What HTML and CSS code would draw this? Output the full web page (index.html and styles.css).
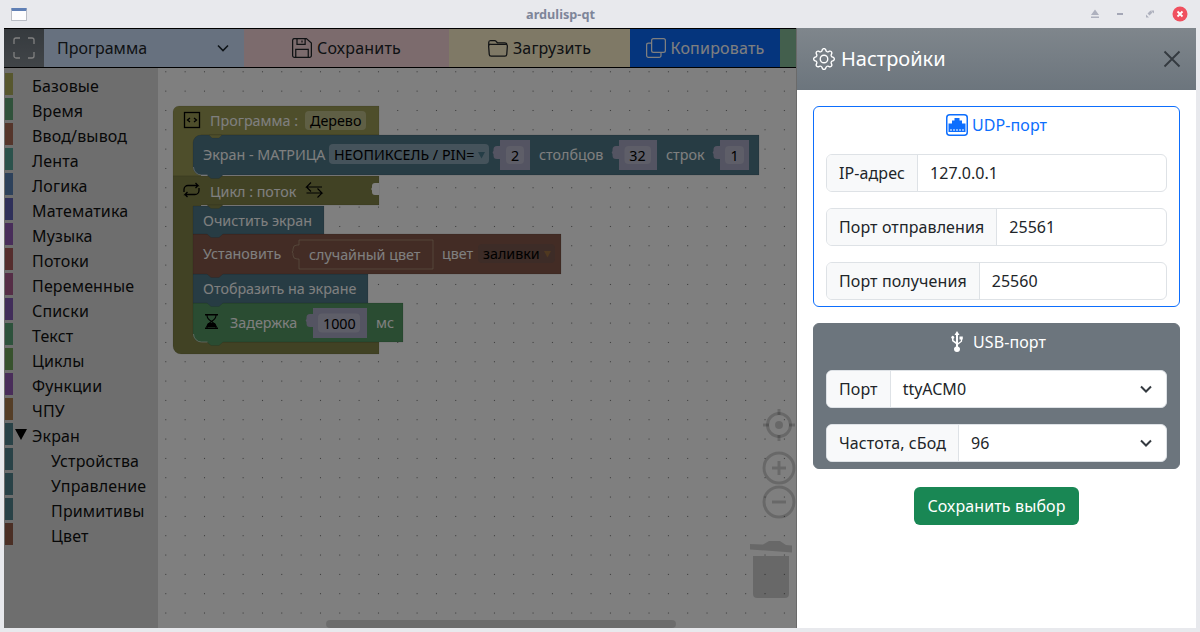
FILE: index.html
```html
<!DOCTYPE html>
<html lang="ru">
<head>
<meta charset="utf-8">
<title>ardulisp-qt</title>
<link rel="stylesheet" href="styles.css">
</head>
<body>
<div class="window">
  <header class="titlebar">
    <div class="win-icon"></div>
    <div class="win-title">ardulisp-qt</div>
    <div class="win-controls">
      <svg class="ctl ctl-a" width="24" height="14" viewBox="0 0 24 14"><path d="M12 2.500L16 8H8Z M8 9.500H16V11H8Z" fill="#aeb1be"/></svg>
      <svg class="ctl ctl-b" width="24" height="14" viewBox="0 0 24 14"><rect x="9" y="6" width="6" height="2" fill="#a4a7b6"/></svg>
      <svg class="ctl ctl-c" width="24" height="14" viewBox="0 0 24 14"><path d="M13 3.500h3v3zM8 7.500l3 3H8z M9.500 6.500l3-3 2 2-3 3z" fill="#aeb1be"/></svg>
      <svg class="ctl-close" width="16" height="16" viewBox="0 0 16 16"><circle cx="8" cy="8" r="7.500" fill="#f0505f"/><path d="M5.500 5.500l5 5M10.500 5.500l-5 5" stroke="#fff" stroke-width="1.800"/></svg>
    </div>
  </header>

  <div class="app">
    <nav class="toolbar">
      <button class="tb-expand">
        <svg width="22" height="22" viewBox="0 0 22 22" fill="none" stroke="#fff" stroke-width="1.300"><path d="M1 7V3a2 2 0 0 1 2-2h4M15 1h4a2 2 0 0 1 2 2v4M21 15v4a2 2 0 0 1-2 2h-4M7 21H3a2 2 0 0 1-2-2v-4"/></svg>
      </button>
      <div class="tb-select"><span>Программа</span>
        <svg width="12" height="8" viewBox="0 0 12 8" fill="none" stroke="#1c2730" stroke-width="1.600"><path d="M1 1.500l5 5 5-5"/></svg>
      </div>
      <button class="tb-btn tb-save">
        <svg width="20" height="20" viewBox="0 0 16 16" fill="none" stroke="#212529" stroke-width="1"><path d="M1.500.500h10l4 3.500v10a1.500 1.500 0 0 1-1.500 1.500H2A1.500 1.500 0 0 1 .500 14V2a1.500 1.500 0 0 1 1-1.500z"/><path d="M4 .500v4.500h6.500V.500M8 2v1.500M3 15.500V9h10v6.500"/></svg>
        Сохранить</button>
      <button class="tb-btn tb-load">
        <svg width="20" height="20" viewBox="0 0 16 16" fill="none" stroke="#212529" stroke-width="1"><path d="M.600 6V3.500A1.500 1.500 0 0 1 2 2h3.300c.8 0 1 .4 1.500 1l.7.800h6a1.500 1.500 0 0 1 1.500 1.500"/><path d="M1.900 5h12.200a1.400 1.400 0 0 1 1.400 1.500l-.5 6.600a1.500 1.500 0 0 1-1.500 1.400H2.500A1.500 1.500 0 0 1 1 13.100L.5 6.500A1.400 1.400 0 0 1 1.900 5z"/></svg>
        Загрузить</button>
      <button class="tb-btn tb-copy">
        <svg width="20" height="20" viewBox="0 0 16 16" fill="none" stroke="#fff" stroke-width="1"><rect x="4.500" y=".500" width="11" height="11" rx="1.500"/><path d="M4.500 4H2A1.500 1.500 0 0 0 .500 5.500V14A1.500 1.500 0 0 0 2 15.500h8.500a1.500 1.500 0 0 0 1.500-1.500v-2.500"/></svg>
        Копировать</button>
      <div class="tb-rest"></div>
    </nav>

    <div class="main">
      <aside class="toolbox">
        <div class="cat"><i class="tag c1"></i><span>Базовые</span></div>
        <div class="cat"><i class="tag c2"></i><span>Время</span></div>
        <div class="cat"><i class="tag c3"></i><span>Ввод/вывод</span></div>
        <div class="cat"><i class="tag c4"></i><span>Лента</span></div>
        <div class="cat"><i class="tag c5"></i><span>Логика</span></div>
        <div class="cat"><i class="tag c6"></i><span>Математика</span></div>
        <div class="cat"><i class="tag c7"></i><span>Музыка</span></div>
        <div class="cat"><i class="tag c8"></i><span>Потоки</span></div>
        <div class="cat"><i class="tag c9"></i><span>Переменные</span></div>
        <div class="cat"><i class="tag c10"></i><span>Списки</span></div>
        <div class="cat"><i class="tag c11"></i><span>Текст</span></div>
        <div class="cat"><i class="tag c12"></i><span>Циклы</span></div>
        <div class="cat"><i class="tag c13"></i><span>Функции</span></div>
        <div class="cat"><i class="tag c14"></i><span>ЧПУ</span></div>
        <div class="cat cat-open"><i class="tag c15"></i><b class="arrow"></b><span>Экран</span></div>
        <div class="cat cat-sub"><i class="tag c15"></i><span>Устройства</span></div>
        <div class="cat cat-sub"><i class="tag c15"></i><span>Управление</span></div>
        <div class="cat cat-sub"><i class="tag c15"></i><span>Примитивы</span></div>
        <div class="cat cat-sub"><i class="tag c16"></i><span>Цвет</span></div>
      </aside>

      <svg class="workspace" viewBox="158 68 1038 560" width="1038" height="560">
        <defs>
          <pattern id="grid" x="165.300" y="71.300" width="19.330" height="19.330" patternUnits="userSpaceOnUse">
            <rect width="1" height="1" fill="#666"/>
          </pattern>
        </defs>
        <rect x="158" y="68" width="1038" height="560" fill="#fff"/>
        <rect x="158" y="68" width="1038" height="560" fill="url(#grid)"/>

        <!-- program block -->
        <path class="b-olive" d="M179 106H379V135H201V176H173V112a6 6 0 0 1 6-6z"/>
        <!-- loop block -->
        <path class="b-olive2" d="M173 176H379V205H201V342H379V354H181a8 8 0 0 1-8-8z"/>
        <path class="b-notch" d="M379 183h-4a3 3 0 0 0-3 3v1.500a2 2 0 0 0 0 3V192a3 3 0 0 0 3 3h4z"/>

        <!-- delay -->
        <path class="b-green" d="M193 303H403V342H223l-4 3.500h-8l-4-3.500H201a8 8 0 0 1-8-8z"/>
        <path class="b-edge" d="M193.500 334a8 8 0 0 0 8 8h6"/>
        <!-- display -->
        <path class="b-teal" d="M193 274H368V303H223l-4 3.500h-8l-4-3.500H193z"/>
        <!-- set colour -->
        <path class="b-brown" d="M193 234H561V274H223l-4 3.500h-8l-4-3.500H193z"/>
        <!-- clear -->
        <path class="b-teal" d="M193 206H324V234H223l-4 3.500h-8l-4-3.500H193z"/>
        <path class="b-olive2" d="M207 205h16l-4 3.500h-8z"/>
        <!-- matrix -->
        <path class="b-teal" d="M201 135H759V175H223l-4 3.500h-8l-4-3.500H201a8 8 0 0 1-8-8V143a8 8 0 0 1 8-8z"/>
        <path class="b-edge" d="M193.500 167a8 8 0 0 0 8 8h6"/>
        <path class="b-olive" d="M209 135h13l-3 3h-7z"/>

        <!-- program row -->
        <rect class="ico-line" x="184.500" y="112.500" width="15" height="15"/>
        <path class="ico-line" d="M190 118l-2.500 2 2.500 2M194 118l2.500 2-2.500 2"/>
        <text class="bt" x="210" y="126">Программа :</text>
        <rect class="f-olive" x="305" y="111" width="61" height="19" rx="4"/>
        <text class="fv" x="310" y="126">Дерево</text>

        <!-- matrix row -->
        <text class="bt" x="203" y="160">Экран - МАТРИЦА</text>
        <rect class="f-teal" x="329" y="144" width="160" height="20" rx="4"/>
        <text class="fv" x="334" y="160">НЕОПИКСЕЛЬ / PIN=</text>
        <path class="arr-teal" d="M478 152h7l-3.500 6.500z"/>
        <path class="shadow" d="M500 140h30v30h-30v-11h-3a3.500 3.500 0 0 1-3.500-3.500v-1.500a2 2 0 0 1 0-3v-1.500a3.500 3.500 0 0 1 3.500-3.500h3z"/>
        <rect class="field" x="506" y="146" width="18" height="18" rx="4"/>
        <text class="fv" x="515" y="161" text-anchor="middle">2</text>
        <text class="bt" x="539" y="160">столбцов</text>
        <path class="shadow" d="M619 140h38v30h-38v-11h-3a3.500 3.500 0 0 1-3.500-3.500v-1.500a2 2 0 0 1 0-3v-1.500a3.500 3.500 0 0 1 3.500-3.500h3z"/>
        <rect class="field" x="624.500" y="146" width="26.500" height="18" rx="4"/>
        <text class="fv" x="637.500" y="161" text-anchor="middle">32</text>
        <text class="bt" x="666" y="160">строк</text>
        <path class="shadow" d="M720 140h29v30h-29v-11h-3a3.500 3.500 0 0 1-3.500-3.500v-1.500a2 2 0 0 1 0-3v-1.500a3.500 3.500 0 0 1 3.500-3.500h3z"/>
        <rect class="field" x="725" y="146" width="19" height="18" rx="4"/>
        <text class="fv" x="734.500" y="161" text-anchor="middle">1</text>

        <!-- loop row -->
        <path class="ico-line" d="M184 192v-2.500a4 4 0 0 1 4-4h10l-2.500-2.500M198 185.500l-2.500 2.500M199 188v2.500a4 4 0 0 1-4 4h-10l2.500-2.500M185 194.500l2.500 2.500"/>
        <text class="bt" x="210" y="197">Цикл : поток</text>
        <path class="ico-thin" d="M322 187h-15.500l4.500-4.500M306.500 187l4.500 4.500M306.500 193h15.500l-4.500-4.500M322 193l-4.500 4.500"/>

        <text class="bt" x="203" y="226">Очистить экран</text>

        <!-- set colour row -->
        <text class="bt" x="203" y="259">Установить</text>
        <path class="tab-brown" d="M299 240h134v29h-134v-10h-2a4 4 0 0 1-4-4v-1.500a2 2 0 0 1 0-3v-1.500a4 4 0 0 1 4-4h2z"/>
        <text class="bt" x="309" y="260">случайный цвет</text>
        <text class="bt" x="442" y="259">цвет</text>
        <rect class="f-brown" x="478" y="244" width="77" height="19" rx="4"/>
        <text class="fv" x="483" y="259">заливки</text>
        <path class="arr-brown" d="M544 251h7l-3.500 6.500z"/>

        <text class="bt" x="203" y="294">Отобразить на экране</text>

        <!-- delay row -->
        <path class="ico-fill" d="M205 314h13v1.500h-13zM205 327.500h13v1.500h-13zM208 323h7l2 4h-11z"/>
        <path class="ico-thin" d="M207 315c0 4 2 5 4.500 6.500 2.500-1.500 4.500-2.500 4.500-6.500M207 328c0-4 2-5 4.500-6.500 2.500 1.500 4.500 2.500 4.500 6.500"/>
        <text class="bt" x="230" y="328">Задержка</text>
        <path class="shadow" d="M313 308h54v30h-54v-11h-3a3.500 3.500 0 0 1-3.500-3.500v-1.500a2 2 0 0 1 0-3v-1.500a3.500 3.500 0 0 1 3.500-3.500h3z"/>
        <rect class="field" x="318" y="313.500" width="42" height="19" rx="4"/>
        <text class="fv" x="323" y="329">1000</text>
        <text class="bt" x="376" y="328">мс</text>

        <!-- workspace controls -->
        <g class="ctrl">
          <circle cx="779" cy="425" r="11.500"/>
          <path d="M779 409v6M779 435v6M763 425h6M789 425h6"/>
          <circle class="ctrl-dot" cx="779" cy="425" r="4"/>
          <circle cx="779" cy="468" r="15"/>
          <path d="M772 468h14M779 461v14"/>
          <circle cx="779" cy="502" r="15"/>
          <path d="M772 502h14"/>
        </g>
        <path class="trash" d="M750 544l13 .5 6-3.500h11l6 4 6 .5v7l-42-3z"/>
        <path class="trash" d="M753 556h36v38a4 4 0 0 1-4 4h-28a4 4 0 0 1-4-4z"/>
        <rect class="hscroll" x="326" y="620" width="350" height="8" rx="4"/>
      </svg>
    </div>

    <div class="backdrop"></div>

    <section class="offcanvas">
      <div class="oc-head">
        <h5 class="oc-title">
          <svg width="22" height="22" viewBox="0 0 16 16" fill="#fff"><path d="M8 4.754a3.246 3.246 0 1 0 0 6.492 3.246 3.246 0 0 0 0-6.492M5.754 8a2.246 2.246 0 1 1 4.492 0 2.246 2.246 0 0 1-4.492 0"/><path d="M9.796 1.343c-.527-1.790-3.065-1.790-3.592 0l-.094.319a.873.873 0 0 1-1.255.520l-.292-.160c-1.640-.892-3.433.902-2.540 2.541l.159.292a.873.873 0 0 1-.520 1.255l-.319.094c-1.790.527-1.790 3.065 0 3.592l.319.094a.873.873 0 0 1 .520 1.255l-.160.292c-.892 1.640.901 3.434 2.541 2.540l.292-.159a.873.873 0 0 1 1.255.520l.094.319c.527 1.790 3.065 1.790 3.592 0l.094-.319a.873.873 0 0 1 1.255-.520l.292.160c1.640.893 3.434-.902 2.540-2.541l-.159-.292a.873.873 0 0 1 .520-1.255l.319-.094c1.790-.527 1.790-3.065 0-3.592l-.319-.094a.873.873 0 0 1-.520-1.255l.160-.292c.893-1.640-.902-3.433-2.541-2.540l-.292.159a.873.873 0 0 1-1.255-.520zm-2.633.283c.246-.835 1.428-.835 1.674 0l.094.319a1.873 1.873 0 0 0 2.693 1.115l.291-.160c.764-.415 1.600.420 1.184 1.185l-.159.292a1.873 1.873 0 0 0 1.116 2.692l.318.094c.835.246.835 1.428 0 1.674l-.319.094a1.873 1.873 0 0 0-1.115 2.693l.160.291c.415.764-.420 1.600-1.185 1.184l-.291-.159a1.873 1.873 0 0 0-2.693 1.116l-.094.318c-.246.835-1.428.835-1.674 0l-.094-.319a1.873 1.873 0 0 0-2.692-1.115l-.292.160c-.764.415-1.600-.420-1.184-1.185l.159-.291A1.873 1.873 0 0 0 1.945 8.930l-.319-.094c-.835-.246-.835-1.428 0-1.674l.319-.094A1.873 1.873 0 0 0 3.060 4.377l-.160-.292c-.415-.764.420-1.600 1.185-1.184l.292.159a1.873 1.873 0 0 0 2.692-1.115z"/></svg>
          Настройки
        </h5>
        <svg class="oc-close" width="18" height="18" viewBox="0 0 18 18" stroke="#343a40" stroke-width="1.900" fill="none"><path d="M1.500 1.500l15 15M16.500 1.500l-15 15"/></svg>
      </div>
      <div class="oc-body">
        <div class="card card-udp">
          <div class="card-title">
            <svg width="22" height="22" viewBox="0 0 22 22"><rect x=".75" y=".75" width="20.500" height="20.500" rx="3" fill="#fff" stroke="#0d6efd" stroke-width="1.500"/><path d="M2.500 18V9.500H6V6.500H8.500V4H13.500V6.500H16V9.500H19.500V18Z" fill="#0d6efd"/><path d="M5 15v2M8 15v2M11 15v2M14 15v2M17 15v2" stroke="#fff"/></svg>
            <span>UDP-порт</span>
          </div>
          <div class="group"><div class="g-label">IP-адрес</div><div class="g-value">127.0.0.1</div></div>
          <div class="group"><div class="g-label">Порт отправления</div><div class="g-value">25561</div></div>
          <div class="group"><div class="g-label">Порт получения</div><div class="g-value">25560</div></div>
        </div>
        <div class="card card-usb">
          <div class="card-title">
            <svg width="16" height="22" viewBox="0 0 16 22" fill="#fff"><path d="M8 0l2.500 4H9v11.500c1.300.4 2 1.400 2 2.500a3 3 0 0 1-6 0c0-1.100.7-2.100 2-2.500V13L3.500 10.500A2 2 0 0 1 3 9.300V7.800a1.500 1.500 0 1 1 1.500 0v1.400L7 11V4H5.500z"/><path d="M9 12l2.800-2V8.500H10.500V5.500h3.300v3h-.7V10.500L9 13.800z"/></svg>
            <span>USB-порт</span>
          </div>
          <div class="group"><div class="g-label">Порт</div><div class="g-value g-select">ttyACM0<svg width="12" height="8" viewBox="0 0 12 8" fill="none" stroke="#343a40" stroke-width="2"><path d="M1 1.500l5 5 5-5"/></svg></div></div>
          <div class="group"><div class="g-label">Частота, сБод</div><div class="g-value g-select">96<svg width="12" height="8" viewBox="0 0 12 8" fill="none" stroke="#343a40" stroke-width="2"><path d="M1 1.500l5 5 5-5"/></svg></div></div>
        </div>
        <button class="btn-save">Сохранить выбор</button>
      </div>
    </section>
  </div>
</div>
</body>
</html>
```

FILE: styles.css
```css
* { box-sizing: border-box; }
html, body { margin: 0; height: 100%; }
body {
  font-family: "Noto Sans", sans-serif;
  font-size: 16px;
  color: #212529;
  background: #e8e9ed;
  overflow: hidden;
}
.window { width: 1200px; height: 632px; display: flex; flex-direction: column; padding: 0 4px 4px; }

.titlebar { height: 28px; flex: none; display: flex; align-items: center; position: relative; }
.win-icon {
  width: 16px; height: 13px; margin-left: 7px;
  border: 1px solid #b9bcc4; border-top: 3px solid #5f7fb5; border-radius: 1px; background: #fdfdfe;
}
.win-title {
  flex: 1; text-align: center; font-size: 12.700px; font-weight: 700; color: #7e8599;
  padding-left: 11px;
}
.win-controls { display: flex; align-items: center; padding-right: 8px; }
.ctl-b { margin-left: 1px; }
.ctl-c { margin-left: 6px; }
.ctl-close { margin-left: 10px; }

.app { flex: 1; position: relative; display: flex; flex-direction: column; min-height: 0; overflow: hidden; }

.toolbar { height: 40px; flex: none; display: flex; border-top: 1px solid #000; border-bottom: 1px solid #000; }
.toolbar button { font: inherit; letter-spacing: .2px; color: #212529; border: 0; padding: 0; display: flex; align-items: center; justify-content: center; gap: 5px; }
.tb-expand { width: 40px; background: linear-gradient(#6c757d, #828a91); }
.tb-select { width: 200px; background: #cfe2ff; display: flex; align-items: center; justify-content: space-between; padding: 0 15px 0 13px; }
.tb-save { width: 205px; background: #f8d7da; }
.tb-load { width: 181px; background: #fff3cd; }
.toolbar .tb-copy { width: 150px; background: #0a6afa; color: #fff; }
.tb-rest { flex: 1; background: #86be9a; }

.main { flex: 1; display: flex; min-height: 0; }
.toolbox { width: 154px; flex: none; background: #ddd; padding-top: 5px; }
.cat { height: 25px; display: flex; align-items: flex-start; padding-left: 1px; line-height: 22px; position: relative; }
.cat span { margin-left: 19px; margin-top: 2px; color: #111; letter-spacing: .15px; }
.cat-sub span { margin-left: 38px; }
.tag { width: 8px; height: 22px; flex: none; }
.arrow { position: absolute; left: 11px; top: 6px; border: 6px solid transparent; border-top: 11px solid #000; border-bottom: 0; }
.c1 { background: #aeae5c; } .c2 { background: #60a476; } .c3 { background: #aa6a56; }
.c4 { background: #56a498; } .c5 { background: #5a82b6; } .c6 { background: #5e60b4; }
.c7 { background: #905ab4; } .c8 { background: #aa5a5a; } .c9 { background: #aa5a8c; }
.c10 { background: #825ab4; } .c11 { background: #5aa478; } .c12 { background: #6ea45a; }
.c13 { background: #925ab4; } .c14 { background: #aa7c4e; } .c15 { background: #52848f; } .c16 { background: #965e4a; }

.workspace { display: block; flex: none; }
.workspace text { font-family: "Noto Sans", sans-serif; font-size: 14.300px; }
.bt { fill: #fff; }
.fv { fill: #000; }
.b-olive { fill: #9c9c56; stroke: #000; stroke-opacity: .08; }
.b-olive2 { fill: #828448; stroke: #000; stroke-opacity: .08; }
.b-teal { fill: #4e7888; stroke: #000; stroke-opacity: .1; }
.b-brown { fill: #86594a; stroke: #000; stroke-opacity: .1; }
.b-green { fill: #549864; stroke: #000; stroke-opacity: .1; }
.b-edge { fill: none; stroke: #fff; stroke-width: 1; stroke-opacity: .6; }
.b-notch { fill: #fff; }
.shadow { fill: #a8a8c4; }
.field { fill: #bcbcd0; }
.f-olive { fill: #bebe8a; }
.f-teal { fill: #8aa6b6; }
.f-brown { fill: #7a584e; }
.arr-teal { fill: #4a7a8c; }
.arr-brown { fill: #a07240; }
.tab-brown { fill: #86594a; stroke: #c0ac8c; stroke-width: 1; stroke-opacity: .6; }
.ico-line { fill: none; stroke: #000; stroke-width: 1.300; }
.ico-thin { fill: none; stroke: #000; stroke-width: 1.100; }
.ico-fill { fill: #000; }
.ctrl { fill: none; stroke: #000; stroke-opacity: .18; stroke-width: 3; }
.ctrl-dot { fill: #000; fill-opacity: .18; stroke: none; }
.trash { fill: #000; fill-opacity: .18; }
.hscroll { fill: #000; fill-opacity: .15; }

.backdrop { position: absolute; inset: 0; background: rgba(0, 0, 0, .5); }

.offcanvas {
  position: absolute; top: 0; right: 0; bottom: 0; width: 400px;
  background: #fff; display: flex; flex-direction: column;
  border-left: 1px solid #6a6a6a;
}
.oc-head {
  height: 62px; flex: none; display: flex; align-items: center; justify-content: space-between;
  padding: 0 15px 0 16px;
  background: linear-gradient(#7f868c, #6c757d);
}
.oc-title { margin: 0; font-size: 20px; font-weight: 400; color: #fff; display: flex; align-items: center; gap: 6px; line-height: 24px; }
.oc-body { padding: 16px 16px 0; display: flex; flex-direction: column; }
.card { width: 367px; border-radius: 6px; padding: 0 12px; border: 1px solid transparent; }
.card-udp { border-color: #0d6efd; height: 201px; margin-bottom: 16px; }
.card-usb { background: #6c757d; border-color: #6c757d; height: 146px; }
.card-title { height: 36px; display: flex; align-items: center; justify-content: center; gap: 4px; letter-spacing: .1px; }
.card-udp .card-title { color: #0d6efd; margin-bottom: 11px; }
.card-usb .card-title { color: #fff; gap: 8px; margin-bottom: 10px; padding-left: 2px; }
.group { height: 38px; display: flex; margin-bottom: 16px; background: #fff; border: 1px solid #dee2e6; border-radius: 6px; overflow: hidden; line-height: 36px; }
.g-label { padding: 0 12px; background: #f8f9fa; border-right: 1px solid #dee2e6; color: #212529; letter-spacing: .1px; }
.g-value { flex: 1; padding: 0 12px; color: #212529; }
.g-select { display: flex; align-items: center; justify-content: space-between; padding-right: 14px; }
.btn-save {
  align-self: center; margin-top: 18px; height: 38px; width: 165px; padding: 0;
  font: inherit; letter-spacing: .13px; color: #fff; background: #198754; border: 0; border-radius: 6px;
}
```
